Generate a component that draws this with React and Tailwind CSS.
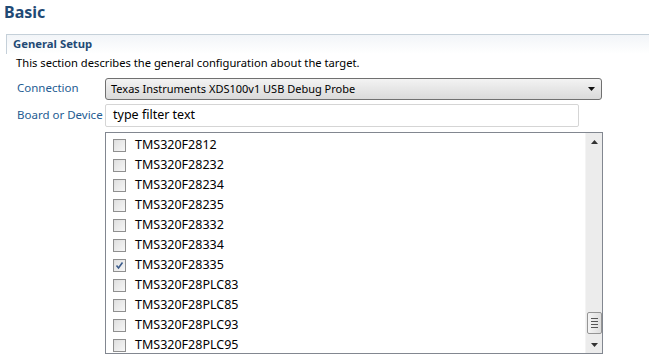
import React from 'react'

const devices = [
  'TMS320F2812',
  'TMS320F28232',
  'TMS320F28234',
  'TMS320F28235',
  'TMS320F28332',
  'TMS320F28334',
  'TMS320F28335',
  'TMS320F28PLC83',
  'TMS320F28PLC85',
  'TMS320F28PLC93',
  'TMS320F28PLC95',
]

function Check({ checked }) {
  return (
    <span className="w-[13px] h-[13px] border border-[#8f8f8f] bg-gradient-to-br from-[#dcdcdc] to-[#f8f8f8] flex items-center justify-center shrink-0">
      <span className="w-[9px] h-[9px] bg-gradient-to-br from-[#e2e2e2] to-[#f4f4f4] flex items-center justify-center">
        {checked && (
          <svg width="9" height="9" viewBox="0 0 9 9">
            <path d="M1.5 4.5 L3.5 7 L7.5 1.5" stroke="#3c5c8c" strokeWidth="1.6" fill="none" />
          </svg>
        )}
      </span>
    </span>
  )
}

export default function App() {
  return (
    <div className="w-[649px] h-[355px] bg-white overflow-hidden text-[12px] text-black" style={{ fontFamily: '"Segoe UI", "Noto Sans", sans-serif' }}>
      <div className="pl-[4px] h-[34px] text-[16px] leading-[24px] font-bold text-[#1f4a75]">Basic</div>

      <div className="ml-[6px] h-[20px] border-t border-l border-[#c5d0d9] bg-gradient-to-b from-[#f2f5f8] to-[#ffffff] pl-[6px] flex items-center font-bold text-[11.3px] text-[#1f4a75]">
        General Setup
      </div>
      <div className="pl-[16px] h-[18px] flex items-center text-[11.2px]">
        This section describes the general configuration about the target.
      </div>

      <div className="flex mt-[6px]">
        <div className="w-[105px] pl-[17px] text-[11.5px] text-[#245c92] pt-[1px] whitespace-nowrap">Connection</div>
        <div className="w-[497px] h-[22px] border border-[#707070] rounded-[3px] bg-gradient-to-b from-[#f3f3f3] to-[#dadada] flex items-center pl-[5px] pr-[6px] text-[11px]">
          <span className="flex-1">Texas Instruments XDS100v1 USB Debug Probe</span>
          <svg width="7" height="4" viewBox="0 0 7 4"><path d="M0 0 L7 0 L3.5 4 Z" fill="#111" /></svg>
        </div>
      </div>

      <div className="flex mt-[4px]">
        <div className="w-[105px] pl-[17px] text-[11.5px] text-[#245c92] pt-[2px] whitespace-nowrap">Board or Device</div>
        <div className="w-[474px] h-[23px] border border-[#d5d5d5] rounded-[2px] flex items-center pl-[7px] text-[12.5px]">
          type filter text
        </div>
      </div>

      <div className="flex mt-[5px]">
        <div className="w-[105px]" />
        <div className="w-[498px] h-[222px] border border-[#828790] flex">
          <div className="flex-1 pt-[2px]">
            {devices.map((d) => (
              <div key={d} className="h-[20px] flex items-center pl-[7px] gap-[9px] text-[12.5px]">
                <Check checked={d === 'TMS320F28335'} />
                <span>{d}</span>
              </div>
            ))}
          </div>
          <div className="w-[17px] bg-[#ececec] border-l border-[#f4f4f4] flex flex-col items-center">
            <div className="h-[17px] flex items-center justify-center">
              <svg width="7" height="4" viewBox="0 0 7 4"><path d="M0 4 L7 4 L3.5 0 Z" fill="#333" /></svg>
            </div>
            <div className="flex-1 w-full flex flex-col justify-end items-center pb-[2px]">
              <div className="w-[15px] h-[22px] border border-[#959595] rounded-[2px] bg-gradient-to-r from-[#f4f4f4] to-[#dedede] flex flex-col items-center justify-center gap-[2px]">
                <span className="w-[7px] h-[1px] bg-[#555]" />
                <span className="w-[7px] h-[1px] bg-[#555]" />
                <span className="w-[7px] h-[1px] bg-[#555]" />
                <span className="w-[7px] h-[1px] bg-[#555]" />
              </div>
            </div>
            <div className="h-[17px] flex items-center justify-center">
              <svg width="7" height="4" viewBox="0 0 7 4"><path d="M0 0 L7 0 L3.5 4 Z" fill="#333" /></svg>
            </div>
          </div>
        </div>
      </div>
    </div>
  )
}
